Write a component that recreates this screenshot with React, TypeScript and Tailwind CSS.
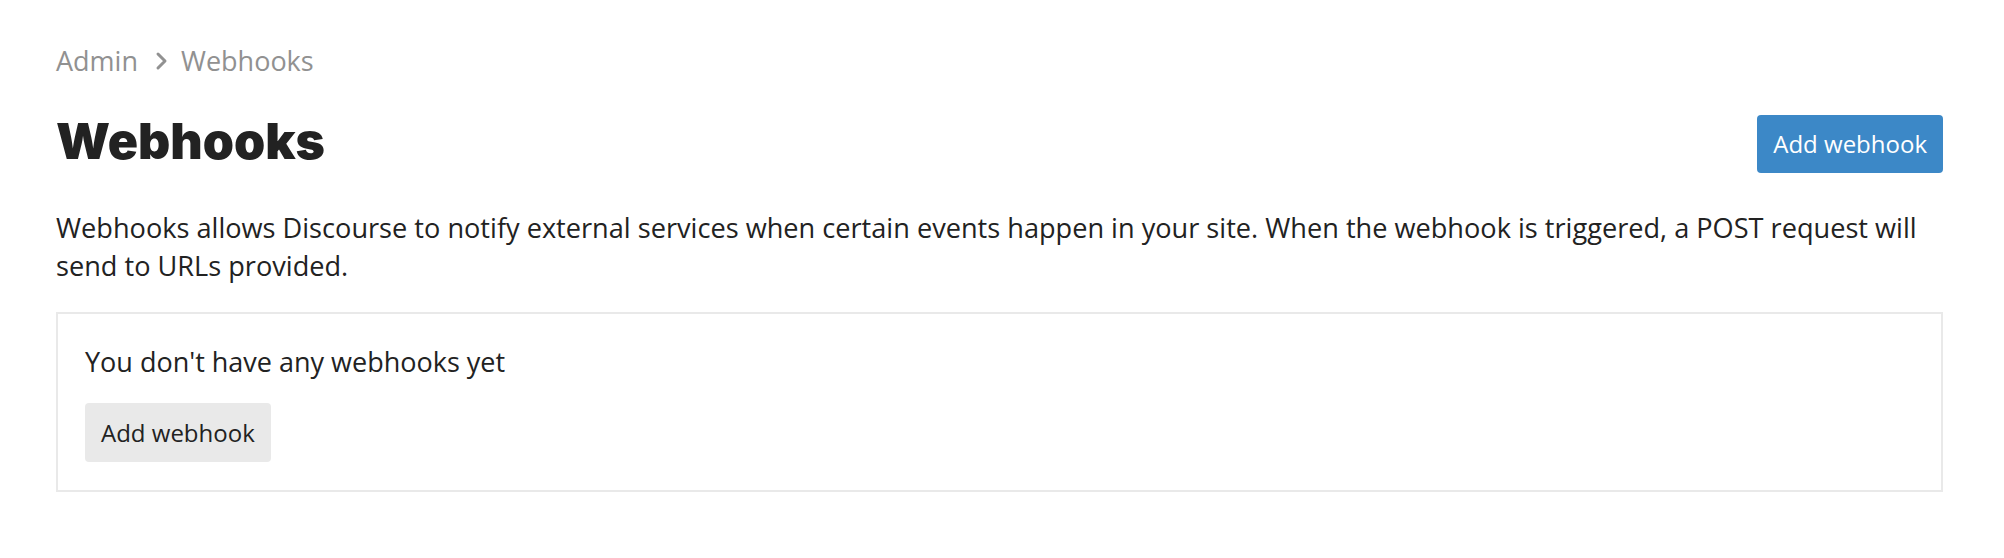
export default function App() {
  return (
    <div className="min-h-[558px] bg-white font-['Open_Sans',sans-serif] text-[#222222]">
      <div className="pl-[56px] pr-[61px] pt-[43px]">
        {/* breadcrumb */}
        <nav className="flex items-center text-[27px] leading-[36px] text-[#919191]">
          <span>Admin</span>
          <svg
            className="ml-[17px] mr-[13px]"
            width="13"
            height="20"
            viewBox="0 0 13 20"
            fill="none"
          >
            <polyline
              points="3,3 10,10 3,17"
              stroke="#919191"
              strokeWidth="3"
              strokeLinecap="round"
              strokeLinejoin="round"
            />
          </svg>
          <span>Webhooks</span>
        </nav>

        <div className="mt-[36px] flex items-start justify-between">
          <h1 className="font-['Inter',sans-serif] text-[50px] font-black leading-[52px] text-[#222222]">
            Webhooks
          </h1>
          <button className="h-[58px] rounded-[4px] bg-[#3c88c7] px-[16px] text-[24px] text-white">
            Add webhook
          </button>
        </div>

        <p className="mt-[36px] text-[27.15px] leading-[38px]">
          Webhooks allows Discourse to notify external services when certain events happen in your
          site. When the webhook is triggered, a POST request will send to URLs provided.
        </p>

        <div className="mt-[27px] border-2 border-[#e9e9e9] px-[27px] pt-[30px] pb-[28px]">
          <p className="text-[27px] leading-[36px]">You don't have any webhooks yet</p>
          <button className="mt-[23px] h-[59px] rounded-[4px] bg-[#e9e9e9] px-[16px] text-[24px] text-[#222222]">
            Add webhook
          </button>
        </div>
      </div>
    </div>
  );
}
